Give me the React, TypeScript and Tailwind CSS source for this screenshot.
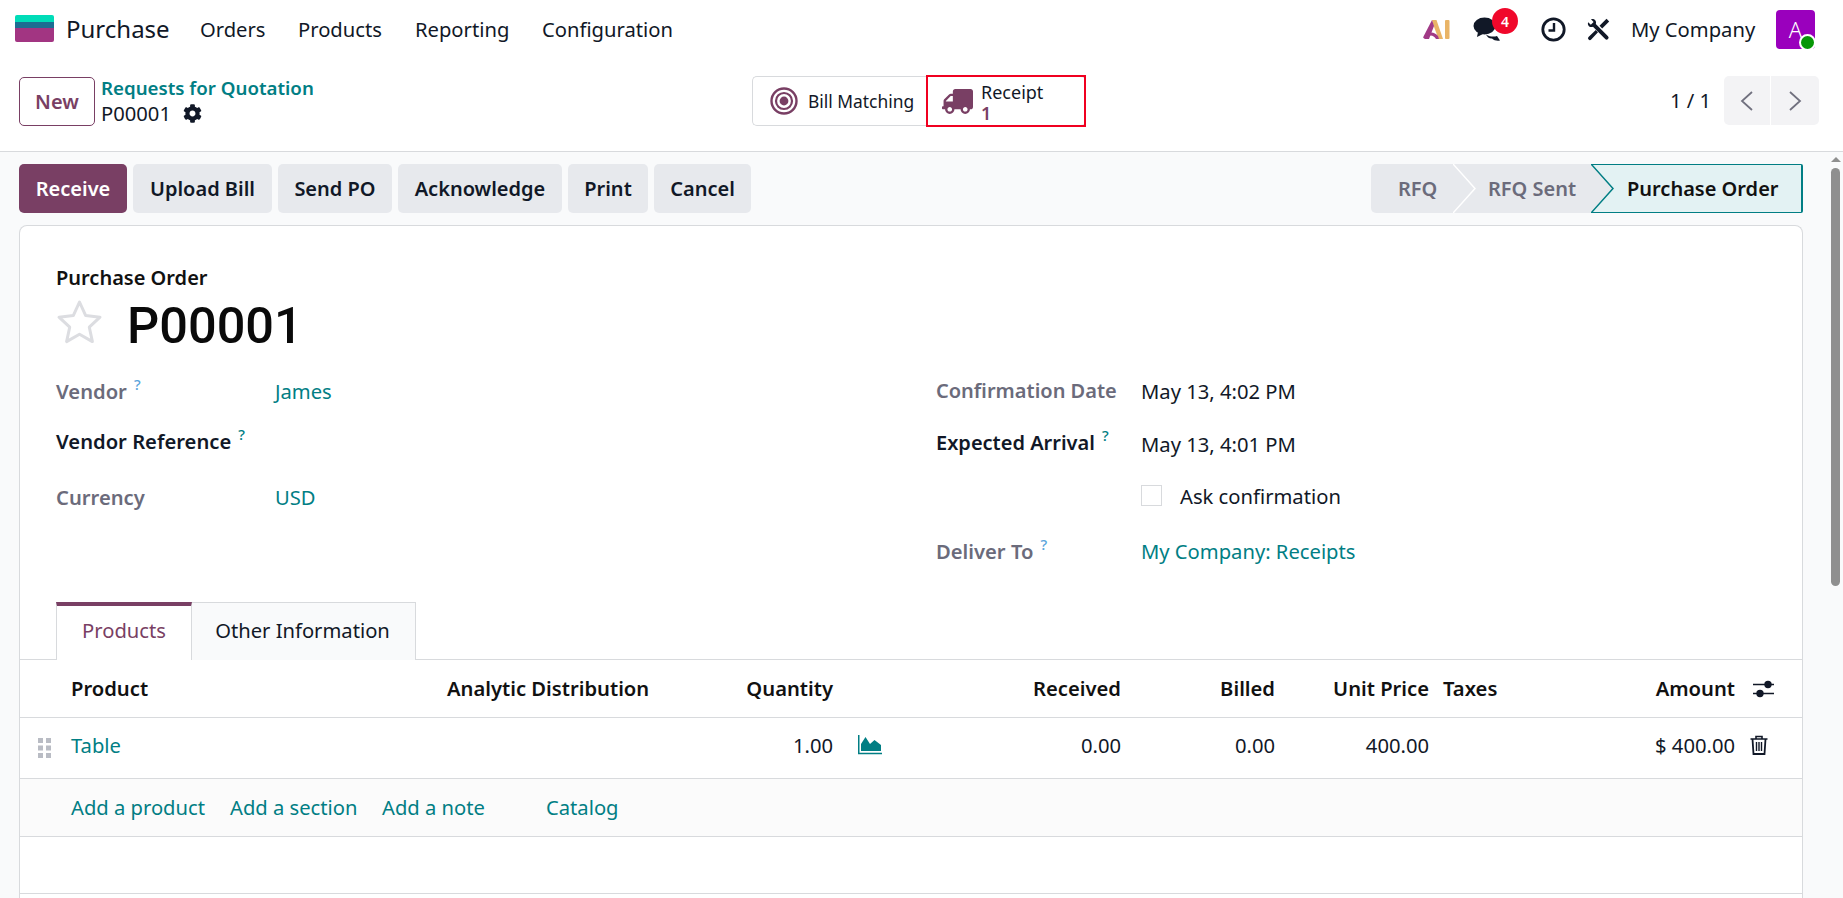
import { FaCog, FaTruck } from "react-icons/fa";

const Help = ({ color = "text-[#5aa5dc]" }: { color?: string }) => (
  <sup className={`ml-[7px] text-[15px] font-medium ${color} relative -top-[9px]`}>?</sup>
);

const Label = ({ children, strong }: { children: React.ReactNode; strong?: boolean }) => (
  <span className={strong ? "font-semibold text-[#111827]" : "font-semibold text-[#6b6b7b]"}>{children}</span>
);

const actionBtn = "h-[49px] rounded-[5px] bg-[#e7e9ed] text-[#111827] font-semibold text-[20px] flex items-center justify-center";
const link = "text-[#017e84]";

function Logo() {
  return (
    <svg width="39" height="27" viewBox="0 0 39 27" className="shrink-0">
      <path d="M0 2a2 2 0 0 1 2-2H37a2 2 0 0 1 2 2V8H0Z" fill="#00dcb8" />
      <rect x="0" y="7" width="39" height="7" fill="#1c6d92" />
      <path d="M0 13H39V25a2 2 0 0 1-2 2H2a2 2 0 0 1-2-2Z" fill="#a23582" />
    </svg>
  );
}

function AiLogo() {
  return (
    <svg width="27" height="21" viewBox="0 0 27 21" className="shrink-0">
      <path d="M9 1 H13.5 L20 20 H15.5 L10 5 Z" fill="#e9b467" />
      <path d="M9 1 L11 7 L6 20 H2 A2 2 0 0 1 0.5 17.5 Z" fill="#a13a86" />
      <path d="M5 14 Q11 12 15 17 L16 20 H13 Q10 15 5 17 Z" fill="#a13a86" />
      <rect x="22" y="1" width="4.5" height="19" rx="1" fill="#e9b467" />
    </svg>
  );
}

function ChatIcon() {
  return (
    <svg width="27" height="24" viewBox="0 0 27 24" className="shrink-0">
      <path d="M13 17.5C17 20 21 20 24 19 L27 23.5 C24 24 21 23.5 19 21.5 C16.5 21.8 14 20 13 17.5Z" fill="#111827" />
      <ellipse cx="11.5" cy="9" rx="11" ry="8.5" fill="#111827" />
      <path d="M5 15 L4 20 L11 16.5Z" fill="#111827" />
    </svg>
  );
}

function ClockIcon() {
  return (
    <svg width="25" height="25" viewBox="0 0 25 25" className="shrink-0">
      <circle cx="12.5" cy="12.5" r="10.7" fill="none" stroke="#111827" strokeWidth="2.8" />
      <path d="M13 6V13.5H7.5" fill="none" stroke="#111827" strokeWidth="2.4" />
    </svg>
  );
}

function ToolsIcon() {
  return (
    <svg width="23" height="23" viewBox="0 0 23 23" className="shrink-0">
      <path d="M1.2 4.2 L3.8 6.8 L6.6 4 L4 1.3 C6.8 0 10 2.4 8.8 6 L21 18.2 A1.9 1.9 0 0 1 18.2 21 L6 8.8 C2.4 10 0 6.9 1.2 4.2Z" fill="#111827" />
      <path d="M19.5 0.8 L22.2 3.5 L15.2 10.5 L12.5 7.8Z" fill="#111827" />
      <path d="M8.8 12 L11 14.2 L4.2 21.5 A1.7 1.7 0 0 1 1.5 19Z" fill="#111827" />
    </svg>
  );
}

function Target() {
  return (
    <svg width="28" height="28" viewBox="0 0 28 28" className="shrink-0">
      <circle cx="14" cy="14" r="12.5" fill="none" stroke="#793f64" strokeWidth="2.4" />
      <circle cx="14" cy="14" r="8" fill="none" stroke="#793f64" strokeWidth="2.2" />
      <circle cx="14" cy="14" r="4.4" fill="#793f64" />
    </svg>
  );
}

function Star() {
  return (
    <svg width="47" height="45" viewBox="0 0 47 45" className="shrink-0 -mt-[10px]">
      <path d="M23.5 3 L29.7 16.6 L44 18.2 L33.3 28.2 L36.4 42.6 L23.5 35.2 L10.6 42.6 L13.7 28.2 L3 18.2 L17.3 16.6 Z" fill="none" stroke="#dcdde1" strokeWidth="3" strokeLinejoin="round" />
    </svg>
  );
}

function Grip() {
  return (
    <svg width="13" height="20" viewBox="0 0 13 20">
      {[0, 7.5, 15].map((y) => (
        <g key={y} fill="#b9bcc4">
          <rect x="0" y={y} width="5" height="5" />
          <rect x="8" y={y} width="5" height="5" />
        </g>
      ))}
    </svg>
  );
}

function AreaChart() {
  return (
    <svg width="24" height="20" viewBox="0 0 24 20">
      <path d="M0.7 0V18.5H24" fill="none" stroke="#017e84" strokeWidth="1.6" />
      <path d="M3 16 V9 L7.5 2 L12 9 L16.5 5 L23 10 V16 Z" fill="#017e84" />
    </svg>
  );
}

function Sliders() {
  return (
    <svg width="22" height="18" viewBox="0 0 22 18" className="shrink-0">
      <path d="M0 4.5H21M0 13.5H21" stroke="#111827" strokeWidth="1.5" />
      <circle cx="15" cy="4.5" r="3.7" fill="#111827" />
      <circle cx="7" cy="13.5" r="3.7" fill="#111827" />
    </svg>
  );
}

function Trash() {
  return (
    <svg width="18" height="20" viewBox="0 0 18 20" className="shrink-0">
      <path d="M0.5 4H17.5M6 4V1.5H12V4" fill="none" stroke="#111827" strokeWidth="1.6" />
      <path d="M2.5 4L3.5 19H14.5L15.5 4" fill="none" stroke="#111827" strokeWidth="1.8" />
      <path d="M6.5 7V16M9 7V16M11.5 7V16" stroke="#111827" strokeWidth="1.4" />
    </svg>
  );
}

function StatusBar() {
  return (
    <div className="flex h-[49px] text-[20px] font-semibold">
      <div className="w-[82px] bg-[#e7e9ed] rounded-l-[5px] flex items-center pl-[27px] text-[#6b6b7b]">RFQ</div>
      <div className="relative w-[139px] bg-[#e7e9ed] flex items-center pl-[35px] text-[#6b6b7b]">
        <svg width="23" height="49" viewBox="0 0 23 49" className="absolute left-0 top-0">
          <path d="M0 0 L22 24.5 L0 49" fill="none" stroke="#ffffff" strokeWidth="1.5" />
        </svg>
        RFQ Sent
      </div>
      <div className="relative w-[211px] bg-[#e3f2f3] border-y-[1.5px] border-r-2 border-[#017e84] rounded-r-[2px] flex items-center pl-[35px] text-[#111]">
        <svg width="23" height="49" viewBox="0 0 23 49" className="absolute -left-[1px] -top-[1.5px]">
          <path d="M0 0 L22 24.5 L0 49 H0 Z" fill="#e7e9ed" />
          <path d="M0 0 L22 24.5 L0 49" fill="none" stroke="#017e84" strokeWidth="1.5" />
        </svg>
        <span className="whitespace-nowrap">Purchase Order</span>
      </div>
    </div>
  );
}

const cols = "grid grid-cols-[51px_376px_213px_173px_288px_154px_154px_306px_67px] items-center";

export default function App() {
  return (
    <div className="w-[1843px] h-[898px] overflow-hidden flex flex-col bg-white text-[#111827] text-[20.2px] font-['Noto_Sans',sans-serif]">
      {/* navbar */}
      <div className="h-[58px] flex items-center shrink-0 text-[#111827]">
        <div className="ml-[15px] -mt-[1px]"><Logo /></div>
        <span className="ml-[12px] text-[24px] w-[103px]">Purchase</span>
        <span className="ml-[31px] w-[66px] pt-[1px]">Orders</span>
        <span className="ml-[32px] w-[85px] pt-[1px]">Products</span>
        <span className="ml-[32px] w-[95px] pt-[1px]">Reporting</span>
        <span className="ml-[32px] w-[131px] pt-[1px] whitespace-nowrap">Configuration</span>
        <div className="ml-auto flex items-center">
          <AiLogo />
          <div className="relative ml-[23px] mr-[20px]">
            <ChatIcon />
            <span className="absolute -top-[9px] left-[19px] w-[26px] h-[26px] rounded-full bg-[#f0082b] text-white text-[14px] font-semibold flex items-center justify-center">4</span>
          </div>
          <div className="ml-[21px]"><ClockIcon /></div>
          <div className="ml-[21px]"><ToolsIcon /></div>
          <span className="ml-[21px] w-[122px] whitespace-nowrap">My Company</span>
          <div className="relative ml-[23px] mr-[28px] w-[39px] h-[39px] rounded-[4px] bg-[#9a00bd] text-white text-[22px] font-light flex items-center justify-center">
            A
            <span className="absolute -right-[1px] -bottom-[2px] w-[17px] h-[17px] rounded-full bg-[#079707] border-2 border-white" />
          </div>
        </div>
      </div>
      {/* control panel */}
      <div className="h-[94px] shrink-0 border-b border-[#d8dadd] flex items-start relative">
        <div className="ml-[19px] mt-[19px] w-[76px] h-[49px] rounded-[5px] border border-[#793f64] text-[#793f64] font-semibold text-[20px] flex items-center justify-center">New</div>
        <div className="ml-[6px] mt-[17px] w-[651px] flex flex-col">
          <span className="text-[#017e84] font-semibold text-[18.7px] leading-[25px]">Requests for Quotation</span>
          <span className="flex items-center leading-[26px]">P00001<FaCog className="ml-[12px] text-[19px]" /></span>
        </div>
        <div className="mt-[18px] flex h-[50px]">
          <div className="w-[174px] h-[50px] border border-r-0 border-[#d8dadd] rounded-l-[5px] flex items-center pl-[17px]">
            <Target />
            <span className="ml-[10px] text-[17.4px] whitespace-nowrap">Bill Matching</span>
          </div>
          <div className="relative w-[160px] h-[50px] border border-[#d8dadd] rounded-r-[5px] flex items-center pl-[15px]">
            <FaTruck className="text-[#793f64] text-[31px] -scale-x-100" />
            <div className="ml-[8px] mt-[3px] flex flex-col text-[18px] leading-[21px]">
              <span>Receipt</span>
              <span className="text-[#793f64] font-semibold">1</span>
            </div>
            <span className="absolute -left-px -right-px -top-[2px] -bottom-[2px] border-2 border-[#f00020]" />
          </div>
        </div>
        <div className="ml-auto mt-[18px] mr-[24px] flex items-center h-[49px]">
          <span className="mr-[13px]">1 / 1</span>
          <div className="flex h-[49px] rounded-[5px] bg-[#f3f3f5] w-[95px] overflow-hidden">
            <div className="w-[47px] flex items-center justify-center border-r border-white">
              <svg width="14" height="22" viewBox="0 0 14 22"><path d="M12 2 L2 11 L12 20" fill="none" stroke="#71717f" strokeWidth="1.8" /></svg>
            </div>
            <div className="flex-1 flex items-center justify-center">
              <svg width="14" height="22" viewBox="0 0 14 22"><path d="M2 2 L12 11 L2 20" fill="none" stroke="#71717f" strokeWidth="1.8" /></svg>
            </div>
          </div>
        </div>
      </div>
      {/* body */}
      <div className="flex-1 flex bg-[#f9fafb] min-h-0">
        <div className="w-[1828px] shrink-0 flex flex-col">
          <div className="h-[73px] shrink-0 pt-[12px] pl-[19px] flex pr-[25px]">
            <div className={`${actionBtn} w-[108px] !bg-[#793f64] !text-white`}>Receive</div>
            <div className={`${actionBtn} ml-[6px] w-[139px]`}>Upload Bill</div>
            <div className={`${actionBtn} ml-[6px] w-[114px]`}>Send PO</div>
            <div className={`${actionBtn} ml-[6px] w-[164px]`}>Acknowledge</div>
            <div className={`${actionBtn} ml-[6px] w-[80px]`}>Print</div>
            <div className={`${actionBtn} ml-[6px] w-[97px]`}>Cancel</div>
            <div className="ml-auto"><StatusBar /></div>
          </div>
          <div className="ml-[19px] w-[1784px] flex-1 bg-white border border-b-0 border-[#d8dadd] rounded-t-[8px] flex flex-col min-h-0">
            <div className="pl-[36px] pt-[39px] h-[376px] shrink-0">
              <div className="font-semibold text-[#111] leading-[26px] text-[20px]">Purchase Order</div>
              <div className="flex items-center mt-[12px] h-[46px]">
                <Star />
                <span className="ml-[24px] text-[50.5px] font-medium text-[#0a0a0a] font-['Roboto',sans-serif]">P00001</span>
              </div>
              <div className="flex mt-[27px]">
                <div className="w-[880px]">
                  <div className="h-[50px] flex items-start"><div className="w-[219px]"><Label>Vendor</Label><Help /></div><span className={link}>James</span></div>
                  <div className="h-[56px] flex items-start"><div className="w-[219px]"><Label strong>Vendor Reference</Label><Help color="text-[#017e84]" /></div></div>
                  <div className="h-[50px] flex items-start"><div className="w-[219px]"><Label>Currency</Label></div><span className={link}>USD</span></div>
                </div>
                <div className="flex-1">
                  <div className="h-[52px] flex items-start"><div className="w-[205px] text-[20px]"><Label>Confirmation Date</Label></div><span>May 13, 4:02 PM</span></div>
                  <div className="h-[53px] flex items-start"><div className="w-[205px] text-[20px]"><Label strong>Expected Arrival</Label><Help color="text-[#017e84]" /></div><span className="mt-[1px]">May 13, 4:01 PM</span></div>
                  <div className="h-[55px] flex items-start"><div className="w-[205px]" /><span className="w-[21px] h-[21px] border border-[#d8dadd] mt-[4px]" /><span className="ml-[18px]">Ask confirmation</span></div>
                  <div className="h-[50px] flex items-start"><div className="w-[205px]"><Label>Deliver To</Label><Help /></div><span className={link}>My Company: Receipts</span></div>
                </div>
              </div>
            </div>
            {/* tabs */}
            <div className="h-[58px] shrink-0 border-b border-[#d8dadd] pl-[36px] flex">
              <div className="w-[136px] h-[58px] border-x border-[#d8dadd] border-t-[4px] border-t-[#793f64] bg-white -mb-px flex items-center justify-center text-[#793f64] pb-[6px]">Products</div>
              <div className="w-[224px] h-[58px] border-t border-r border-[#d8dadd] bg-[#f9fafb] -mb-px flex items-center justify-center pb-[3px] pr-[2px]">Other Information</div>
            </div>
            {/* table */}
            <div className={`${cols} h-[58px] shrink-0 border-b border-[#d8dadd] font-semibold text-[#111]`}>
              <span />
              <span>Product</span>
              <span className="whitespace-nowrap">Analytic Distribution</span>
              <span className="text-right">Quantity</span>
              <span className="text-right">Received</span>
              <span className="text-right">Billed</span>
              <span className="text-right">Unit Price</span>
              <span className="pl-[14px] flex justify-between"><span>Taxes</span><span>Amount</span></span>
              <span className="pl-[18px]"><Sliders /></span>
            </div>
            <div className={`${cols} h-[61px] shrink-0 border-b border-[#d8dadd] pb-[6px]`}>
              <span className="pl-[18px] pt-[6px]"><Grip /></span>
              <span className={link}>Table</span>
              <span />
              <span className="text-right">1.00</span>
              <span className="flex items-center justify-between pl-[25px]"><AreaChart /><span>0.00</span></span>
              <span className="text-right">0.00</span>
              <span className="text-right">400.00</span>
              <span className="text-right">$ 400.00</span>
              <span className="pl-[15px]"><Trash /></span>
            </div>
            <div className="h-[58px] shrink-0 border-b border-[#d8dadd] bg-[#fbfbfb] pl-[51px] flex items-center text-[#017e84]">
              <span className="w-[159px]">Add a product</span>
              <span className="w-[152px]">Add a section</span>
              <span className="w-[164px]">Add a note</span>
              <span>Catalog</span>
            </div>
            <div className="h-[57px] shrink-0 border-b border-[#d8dadd]" />
          </div>
        </div>
        {/* scrollbar */}
        <div className="w-[15px] flex flex-col items-center pt-[5px]">
          <div className="w-0 h-0 border-x-[5px] border-x-transparent border-b-[5px] border-b-[#8f8f8f]" />
          <div className="mt-[6px] w-[9px] h-[418px] rounded-full bg-[#8f8f8f]" />
        </div>
      </div>
    </div>
  );
}
